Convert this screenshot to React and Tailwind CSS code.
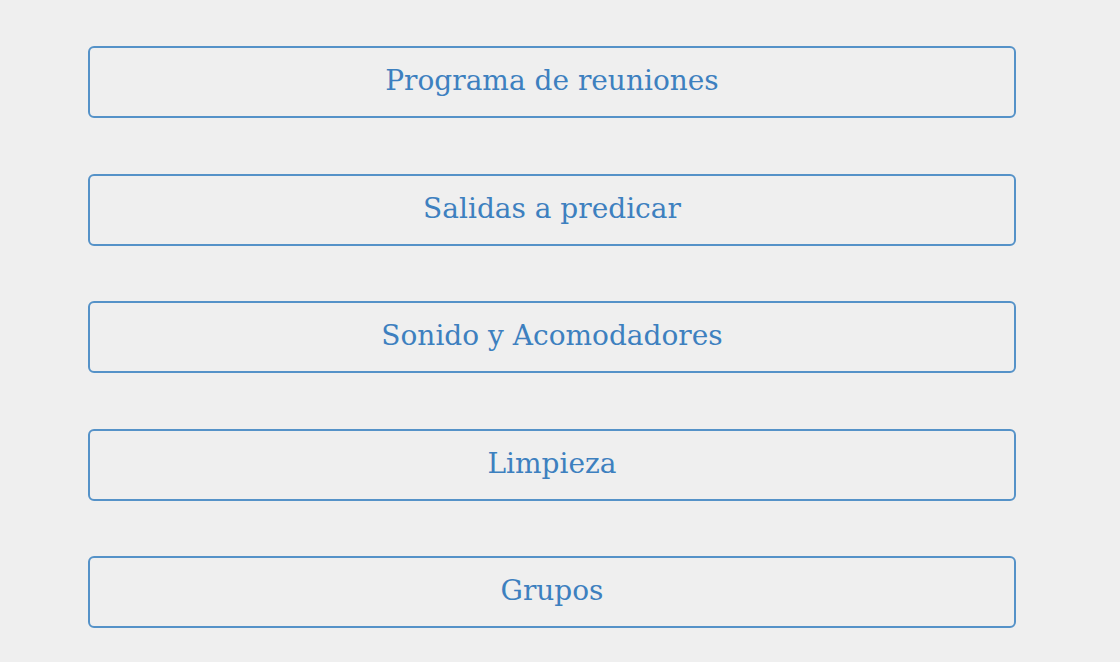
import React from 'react';

const items = ['Programa de reuniones', 'Salidas a predicar', 'Sonido y Acomodadores', 'Limpieza', 'Grupos'];

export default function App() {
  return (
    <div className="min-h-[662px] w-full bg-[#efefef] px-[88px] pt-[46px]">
      <div className="flex w-[928px] flex-col gap-[55.5px]">
        {items.map((label) => (
          <button
            key={label}
            className="h-[72px] w-full rounded-[6px] border-2 border-[#5592c8] bg-transparent pb-[2px] text-[28px] text-[#3d80bf]"
            style={{ fontFamily: '"DejaVu Serif", serif' }}
          >
            {label}
          </button>
        ))}
      </div>
    </div>
  );
}
